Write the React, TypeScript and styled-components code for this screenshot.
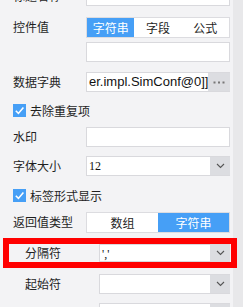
import styled, { createGlobalStyle } from 'styled-components';

const GlobalStyle = createGlobalStyle`
	html, body {
		margin: 0;
		padding: 0;
		overflow: hidden;
	}

	body {
		background: #e8e8ea;
		font-family: "Noto Sans CJK SC", "Noto Sans", sans-serif;
		color: #1f1f1f;
	}
`;

const Page = styled.div`
	display: flex;
	width: 243px;
	height: 307px;
	overflow: hidden;
	background: #e8e8ea;
`;

const Panel = styled.div`
	flex: none;
	width: 233px;
	height: 100%;
	background: #f3f3f5;
`;

const List = styled.div`
	display: flex;
	flex-direction: column;
	margin-top: -14px;
`;

const Row = styled.div<{ $mt?: number; $indent?: number }>`
	display: flex;
	align-items: center;
	height: 20px;
	flex: none;
	margin-top: ${(p) => p.$mt ?? 0}px;
	padding-left: ${(p) => p.$indent ?? 13}px;
`;

const Label = styled.div<{ $w?: number }>`
	flex: none;
	width: ${(p) => p.$w ?? 73}px;
	font-size: 12px;
	line-height: 20px;
	white-space: nowrap;
`;

const TextInput = styled.div<{ $w?: number }>`
	box-sizing: border-box;
	width: ${(p) => p.$w ?? 144}px;
	height: 20px;
	border: 1px solid #d9d9dd;
	background: #fff;
`;

const Select = styled.div<{ $w?: number; $h?: number }>`
	box-sizing: border-box;
	display: flex;
	width: ${(p) => p.$w ?? 144}px;
	height: ${(p) => p.$h ?? 20}px;
	border: 1px solid #d9d9dd;
	border-right: none;
	background: #fff;
	overflow: hidden;
`;

const SelectValue = styled.div<{ $serif?: boolean }>`
	flex: 1;
	min-width: 0;
	padding-left: 2px;
	font-family: ${(p) =>
		p.$serif ? '"Liberation Serif", "DejaVu Serif", serif' : '"Liberation Sans", Arial, sans-serif'};
	font-size: ${(p) => (p.$serif ? 12 : 13)}px;
	line-height: 18px;
	white-space: nowrap;
	overflow: hidden;
	color: #111;
`;

const SideButton = styled.div<{ $w?: number }>`
	flex: none;
	width: ${(p) => p.$w ?? 20}px;
	margin-top: -1px;
	margin-bottom: -1px;
	background: #dcdde1;
	display: flex;
	align-items: center;
	justify-content: center;
`;

const Segmented = styled.div<{ $count: number }>`
	box-sizing: border-box;
	display: grid;
	grid-template-columns: repeat(${(p) => p.$count}, 1fr);
	width: 144px;
	height: 21px;
	border: 1px solid #dcdce0;
	background: #fff;
`;

const Segment = styled.div<{ $active?: boolean }>`
	display: flex;
	align-items: center;
	justify-content: center;
	font-size: 12px;
	background: ${(p) => (p.$active ? '#469ff6' : 'transparent')};
	color: ${(p) => (p.$active ? '#fff' : '#1f1f1f')};
`;

const CheckRow = styled.label<{ $mt?: number }>`
	display: flex;
	align-items: center;
	gap: 4px;
	height: 20px;
	margin-top: ${(p) => p.$mt ?? 0}px;
	padding-left: 13px;
	font-size: 12px;
`;

const CheckBox = styled.span`
	flex: none;
	width: 13px;
	height: 13px;
	background: #469ff6;
	display: flex;
	align-items: center;
	justify-content: center;
`;

const Highlight = styled.div`
	position: relative;
	z-index: 1;
	box-sizing: border-box;
	width: 234px;
	margin: 6px 0 0 3px;
	border: 6px solid #ff0000;
`;

const Chevron = () => (
	<svg width="9" height="6" viewBox="0 0 9 6">
		<path d="M1 1l3.5 3.5L8 1" fill="none" stroke="#555" strokeWidth="1.1" />
	</svg>
);

const Dots = () => (
	<svg width="12" height="3" viewBox="0 0 12 3">
		<rect x="0.5" y="0.5" width="2" height="2" fill="#777" />
		<rect x="5" y="0.5" width="2" height="2" fill="#777" />
		<rect x="9.5" y="0.5" width="2" height="2" fill="#777" />
	</svg>
);

const Tick = () => (
	<svg width="11" height="11" viewBox="0 0 11 11">
		<path d="M1.8 5.8l2.6 2.6L9.4 2.4" fill="none" stroke="#fff" strokeWidth="1.6" />
	</svg>
);

const App = () => {
	return (
		<Page>
			<GlobalStyle />
			<Panel>
				<List>
					<Row>
						<Label>标题名称</Label>
						<TextInput />
					</Row>
					<Row $mt={11}>
						<Label>控件值</Label>
						<Segmented $count={3}>
							<Segment $active>字符串</Segment>
							<Segment>字段</Segment>
							<Segment>公式</Segment>
						</Segmented>
					</Row>
					<Row $mt={5}>
						<Label />
						<TextInput />
					</Row>
					<Row $mt={10}>
						<Label>数据字典</Label>
						<Select>
							<SelectValue>er.impl.SimConf@0]]</SelectValue>
							<SideButton $w={22}>
								<Dots />
							</SideButton>
						</Select>
					</Row>
					<CheckRow $mt={8}>
						<CheckBox>
							<Tick />
						</CheckBox>
						去除重复项
					</CheckRow>
					<Row $mt={7}>
						<Label>水印</Label>
						<TextInput />
					</Row>
					<Row $mt={9}>
						<Label>字体大小</Label>
						<Select>
							<SelectValue $serif>12</SelectValue>
							<SideButton>
								<Chevron />
							</SideButton>
						</Select>
					</Row>
					<CheckRow $mt={9}>
						<CheckBox>
							<Tick />
						</CheckBox>
						标签形式显示
					</CheckRow>
					<Row $mt={7}>
						<Label>返回值类型</Label>
						<Segmented $count={2}>
							<Segment>数组</Segment>
							<Segment $active>字符串</Segment>
						</Segmented>
					</Row>
					<Highlight>
						<Row $indent={16} style={{ height: 18 }}>
							<Label $w={74}>分隔符</Label>
							<Select $w={131} $h={18}>
								<SelectValue $serif>','</SelectValue>
								<SideButton>
									<Chevron />
								</SideButton>
							</Select>
						</Row>
					</Highlight>
					<Row $mt={6} $indent={25}>
						<Label $w={74}>起始符</Label>
						<Select $w={131}>
							<SelectValue />
							<SideButton>
								<Chevron />
							</SideButton>
						</Select>
					</Row>
					<Row $mt={9} $indent={25}>
						<Label $w={74} />
						<Select $w={131}>
							<SelectValue />
							<SideButton>
								<Chevron />
							</SideButton>
						</Select>
					</Row>
				</List>
			</Panel>
		</Page>
	);
};

export default App;
